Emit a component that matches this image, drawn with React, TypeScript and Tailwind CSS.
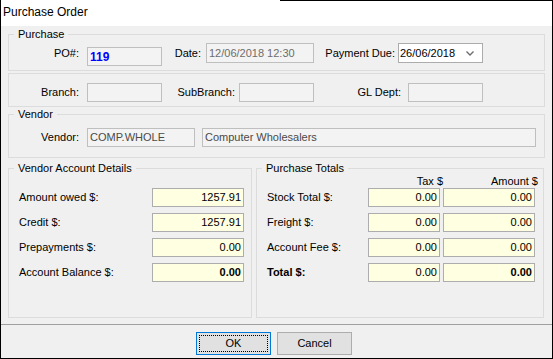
import React from 'react'

// Read-only (disabled) text box
function Plain({
  className = '',
  tone = 'text-[#5f5f5f]',
  children,
}: {
  className?: string
  tone?: string
  children?: React.ReactNode
}) {
  return (
    <div className={`flex h-[19px] items-center border border-[#bfbfbf] bg-[#f3f3f3] px-[2px] ${tone} ${className}`}>
      {children}
    </div>
  )
}

// Yellow amount box
function Amount({ className = '', bold = false, children }: { className?: string; bold?: boolean; children?: React.ReactNode }) {
  return (
    <div
      className={`flex h-[19px] items-center justify-end border border-[#adadad] bg-[#ffffe1] pr-[2px] text-black ${bold ? 'font-bold' : ''} ${className}`}
    >
      {children}
    </div>
  )
}

function Group({ title, className = '', children }: { title?: string; className?: string; children: React.ReactNode }) {
  return (
    <fieldset className={`border border-[#dcdcdc] ${className}`}>
      {title && <legend className="ml-[5px] px-[4px] leading-[13px]">{title}</legend>}
      {children}
    </fieldset>
  )
}

export default function App() {
  const vendorRows = [
    { label: 'Amount owed $:', value: '1257.91' },
    { label: 'Credit $:', value: '1257.91' },
    { label: 'Prepayments $:', value: '0.00' },
    { label: 'Account Balance $:', value: '0.00', bold: true },
  ]
  const totalRows = [
    { label: 'Stock Total $:', tax: '0.00', amount: '0.00' },
    { label: 'Freight $:', tax: '0.00', amount: '0.00' },
    { label: 'Account Fee $:', tax: '0.00', amount: '0.00' },
    { label: 'Total $:', tax: '0.00', amount: '0.00', bold: true },
  ]

  return (
    <div className="flex h-[359px] w-[553px] flex-col border-x border-b border-black bg-[#f0f0f0] font-['Liberation_Sans',Arial,sans-serif] text-[11px] text-black">
      {/* Title bar */}
      <div className="flex h-[26px] flex-col bg-white">
        <div className="ml-[279px] h-[1px] bg-black" />
        <div className="flex h-[25px] items-center px-[2px] pb-[3px] text-[12px]">Purchase Order</div>
      </div>

      {/* Body */}
      <div className="flex flex-col px-[7px] pb-[6px]">
        {/* Purchase */}
        <Group title="Purchase" className="mt-[2px]">
          <div className="flex items-start pb-[4px] pt-[2px]">
            <div className="h-[20px] w-[70px] text-right leading-[20px]">PO#:</div>
            <Plain tone="text-[#0000ff]" className="ml-[8px] mt-[4px] w-[75px] text-[12px] font-bold">
              119
            </Plain>
            <div className="h-[20px] w-[39px] text-right leading-[20px]">Date:</div>
            <Plain tone="text-[#6d6d6d]" className="ml-[5px] h-[20px] w-[108px]">
              12/06/2018 12:30
            </Plain>
            <div className="h-[20px] w-[81px] text-right leading-[20px]">Payment Due:</div>
            <div className="ml-[3px] flex h-[20px] w-[85px] items-center justify-between border border-[#acacac] bg-white pl-[1px] pr-[8px]">
              <span>26/06/2018</span>
              <svg width="8" height="5" viewBox="0 0 8 5">
                <polyline points="0.5,0.5 4,4 7.5,0.5" fill="none" stroke="#6a6a6a" strokeWidth="1.3" />
              </svg>
            </div>
          </div>
        </Group>

        {/* Branch */}
        <Group className="mt-[2px]">
          <div className="flex items-center pb-[4px] pt-[9px]">
            <div className="w-[70px] text-right">Branch:</div>
            <Plain className="ml-[8px] w-[75px]" />
            <div className="w-[73px] text-right">SubBranch:</div>
            <Plain className="ml-[4px] w-[75px]" />
            <div className="w-[87px] text-right">GL Dept:</div>
            <Plain className="ml-[7px] w-[75px]" />
          </div>
        </Group>

        {/* Vendor */}
        <Group title="Vendor" className="mt-[1px]">
          <div className="flex items-center pb-[10px] pt-[7px]">
            <div className="w-[70px] text-right">Vendor:</div>
            <Plain tone="text-[#4a4a4a]" className="ml-[8px] w-[108px]">
              COMP.WHOLE
            </Plain>
            <Plain tone="text-[#4a4a4a]" className="ml-[7px] w-[334px]">
              Computer Wholesalers
            </Plain>
          </div>
        </Group>

        {/* Lower groups */}
        <div className="mt-[4px] flex gap-[4px]">
          <Group title="Vendor Account Details" className="h-[156px] w-[244px]">
            <div className="flex flex-col gap-[6px] pl-[10px] pr-[7px] pt-[13px]">
              {vendorRows.map((r) => (
                <div key={r.label} className="flex items-center">
                  <div className="flex-1">{r.label}</div>
                  <Amount className="w-[92px]" bold={r.bold}>
                    {r.value}
                  </Amount>
                </div>
              ))}
            </div>
          </Group>

          <Group title="Purchase Totals" className="h-[156px] w-[288px]">
            <div className="flex h-[13px] items-center justify-end gap-[3px] pr-[5px] leading-[13px]">
              <div className="w-[72px] text-right">Tax $</div>
              <div className="w-[92px] text-right">Amount $</div>
            </div>
            <div className="flex flex-col gap-[6px] pl-[10px] pr-[8px]">
              {totalRows.map((r) => (
                <div key={r.label} className="flex items-center">
                  <div className={`flex-1 ${r.bold ? 'font-bold' : ''}`}>{r.label}</div>
                  <Amount className="w-[72px]">{r.tax}</Amount>
                  <Amount className="ml-[3px] w-[92px]" bold={r.bold}>
                    {r.amount}
                  </Amount>
                </div>
              ))}
            </div>
          </Group>
        </div>
      </div>

      {/* Separator + buttons */}
      <div className="h-[1px] bg-[#a0a0a0]" />
      <div className="flex flex-1 items-start justify-center gap-[6px] pr-[5px] pt-[7px]">
        <button className="flex h-[23px] w-[75px] items-center justify-center border border-[#0078d7] bg-[#e1e1e1] p-[2px]">
          <span className="flex h-full w-full items-center justify-center border border-dotted border-black">OK</span>
        </button>
        <button className="flex h-[23px] w-[75px] items-center justify-center border border-[#adadad] bg-[#e1e1e1]">
          Cancel
        </button>
      </div>
    </div>
  )
}
